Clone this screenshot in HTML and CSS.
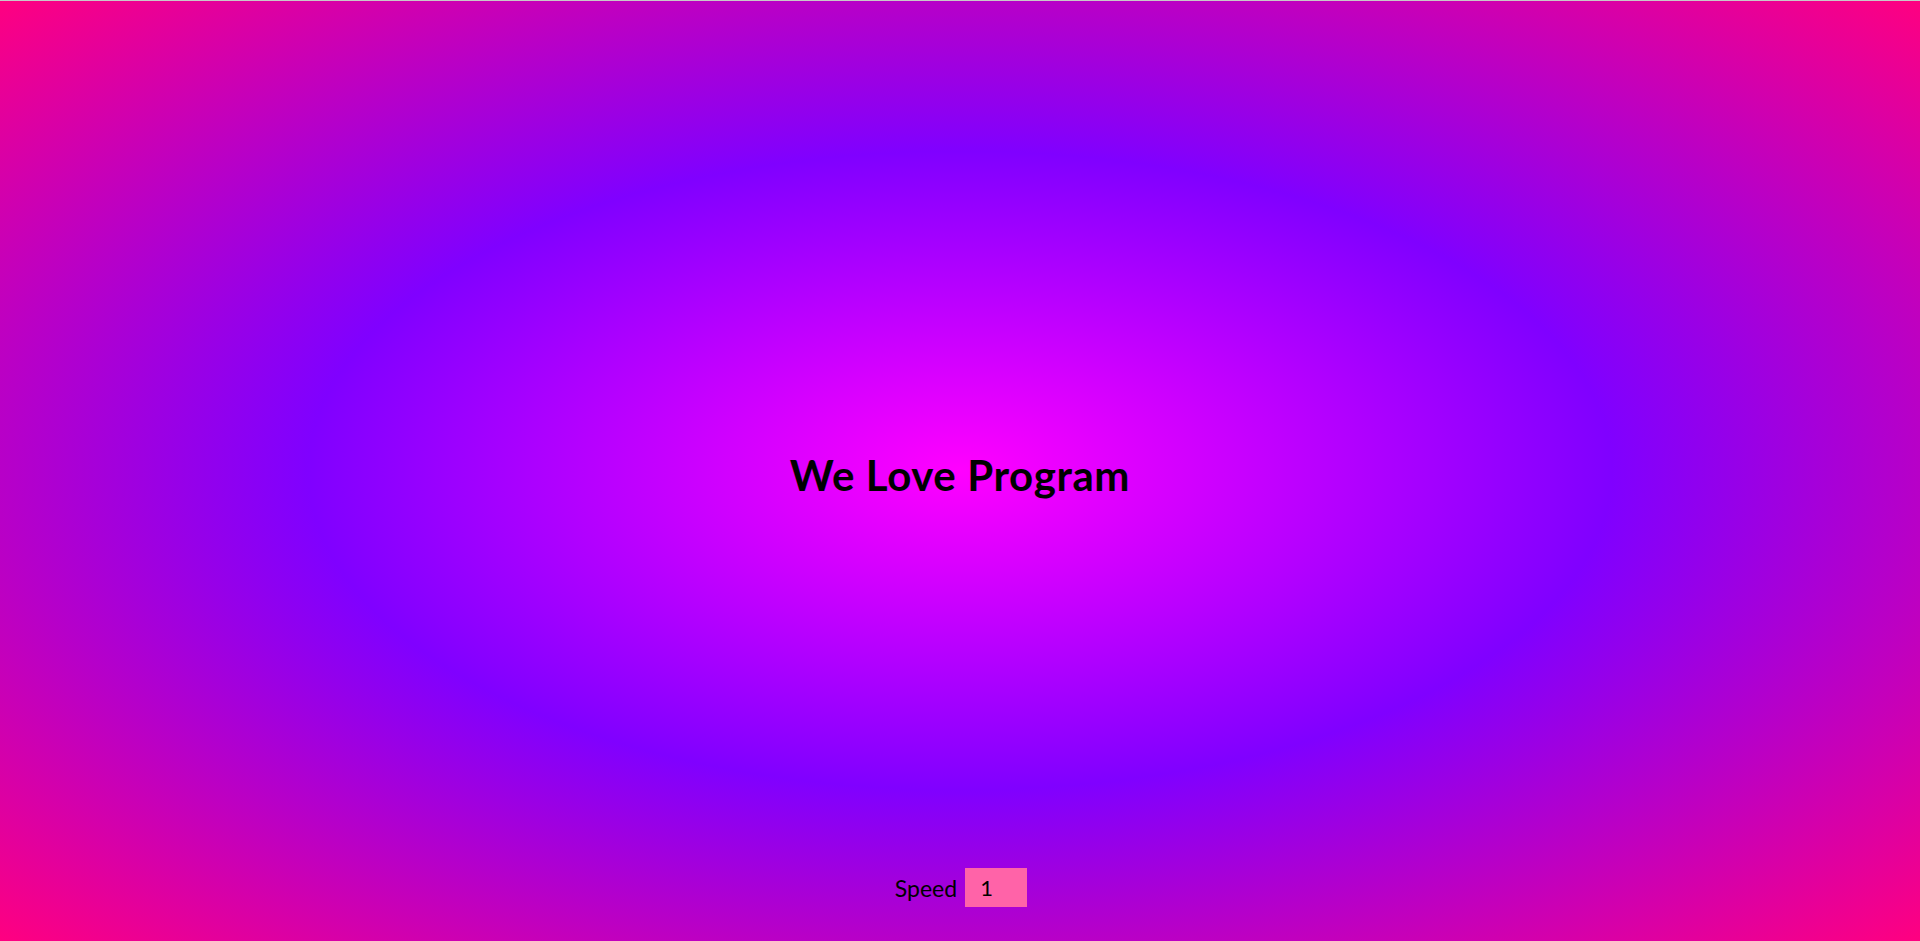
FILE: index.html
```html
<!DOCTYPE html>
<html lang="en">
<head>
<meta charset="utf-8">
<title>We Love Program</title>
<link rel="stylesheet" href="styles.css">
</head>
<body>
<main class="stage">
  <h1 class="title">We Love Program</h1>
</main>
<div class="controls">
  <label class="speed-label" for="speed">Speed</label>
  <input class="speed-input" id="speed" type="text" value="1">
</div>
</body>
</html>
```
FILE: styles.css
```css
html, body {
  margin: 0;
  padding: 0;
  height: 100%;
}
body {
  box-sizing: border-box;
  border-top: 1px solid #c8c8c8;
  background: radial-gradient(ellipse farthest-corner at center, #ff00ff 0%, #8000ff 48%, #ff0080 100%);
  display: flex;
  flex-direction: column;
  font-family: "Comic Sans MS", Lato, "DejaVu Sans", sans-serif;
  color: #000;
  overflow: hidden;
}
.stage {
  flex: 1;
  display: flex;
  align-items: center;
  justify-content: center;
  padding-top: 80px;
}
.title {
  margin: 0;
  font-size: 42px;
  font-weight: 700;
  letter-spacing: 0.6px;
}
.controls {
  display: flex;
  align-items: center;
  justify-content: center;
  gap: 8px;
  padding-bottom: 34px;
  padding-left: 2px;
}
.speed-label {
  font-size: 23px;
}
.speed-input {
  width: 62px;
  height: 39px;
  box-sizing: border-box;
  border: none;
  outline: none;
  background: #ff63a8;
  padding: 0 0 0 15px;
  font-family: inherit;
  font-size: 22px;
  color: #000;
}
```
